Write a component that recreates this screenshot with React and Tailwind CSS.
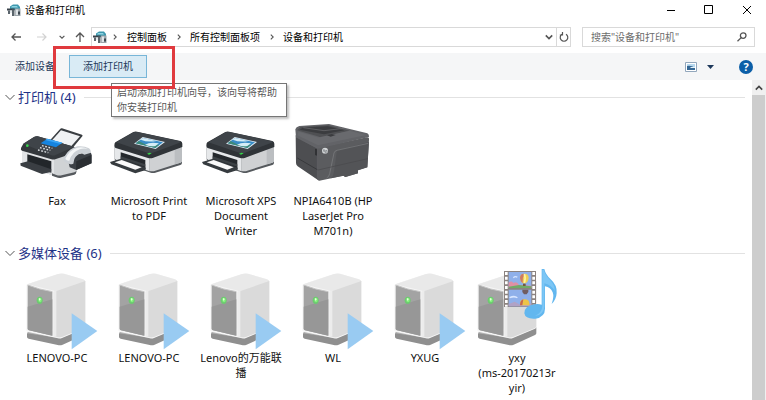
import React from 'react';

const printers = [
  { name: 'Fax', icon: FaxIcon },
  { name: 'Microsoft Print\nto PDF', icon: PrinterIcon },
  { name: 'Microsoft XPS\nDocument\nWriter', icon: PrinterIcon },
  { name: 'NPIA6410B (HP\nLaserJet Pro\nM701n)', icon: LaserIcon },
];

const mediaDevices = [
  { name: 'LENOVO-PC', icon: PlayServerIcon },
  { name: 'LENOVO-PC', icon: PlayServerIcon },
  { name: 'Lenovo的万能联\n播', icon: PlayServerIcon },
  { name: 'WL', icon: PlayServerIcon },
  { name: 'YXUG', icon: PlayServerIcon },
  { name: 'yxy\n(ms-20170213r\nyir)', icon: MediaServerIcon },
];

const crumbs = ['控制面板', '所有控制面板项', '设备和打印机'];

function DevicesIcon() {
  return (
    <svg className="h-3 w-3.5 shrink-0" viewBox="0 0 14 12" aria-hidden="true">
      <path d="M3 2.5 6 .5h5l2 2.5v3H3z" fill="#3c97ae" />
      <path d="M5 2h5l1 1.5H4z" fill="#8fd3e0" />
      <path d="M0 4.5h7.5v2H0z" fill="#39424a" />
      <path d="M1 6.5h2V10H1zM5 5.5h2.5V12H5z" fill="#5b656c" />
      <path d="M3 6.5h2V9H3z" fill="#e4e9ec" />
      <path d="M8 4.5h5.5V12H8z" fill="#9ba4aa" />
      <path d="M8.7 5.5h2.5V11H8.7z" fill="#dfe4e7" />
      <path d="M11 7.5h2v3h-2z" fill="#3c474f" />
    </svg>
  );
}

function Chevron({ className, d, width = 1.3 }) {
  return (
    <svg className={className} viewBox="0 0 10 10" fill="none" stroke="currentColor" strokeWidth={width} aria-hidden="true">
      <path d={d} />
    </svg>
  );
}

function FaxIcon() {
  return (
    <svg className="h-[73px] w-full" viewBox="33 0 276 219" aria-hidden="true">
      {/* paper */}
      <path d="M150 61 181 26q2-2 5-1l60 19q3 2 1 5l-30 36z" fill="#3a3e42" />
      <path d="M157 60 183 31 240 49 212 80z" fill="#f0f2f4" />
      {/* body */}
      <path d="M66 84 162 110 229 88v66q0 6-6 8l-38 9q-8 2-16-1L70 134q-4-2-4-6z" fill="#b9bcbf" />
      <path d="M66 84 162 114v54l-92-34q-4-2-4-6z" fill="#e2e4e6" />
      <path d="M162 112 229 92v62q0 5-5 7l-40 9q-9 2-22-2z" fill="#d0d3d5" />
      <path d="m156 160 13 5q8 3 16 1l38-9q6-2 6-6v5q0 6-6 8l-38 9q-8 2-16-1l-13-5z" fill="#55595d" />
      <path d="M82 103 154 124v34l-72-25z" fill="#22262a" />
      <path d="M61 130 84 124 154 148l-1 8-27 6-64-25z" fill="#3a3e43" />
      {/* lid */}
      <path d="M70 71 102 51q5-3 11-2l109 31q8 4 8 12l-1 5-61 20q-7 3-14 1L66 92q-5-2-3-8z" fill="#34383c" />
      <path d="M70 71 102 51q5-3 11-2l109 31-55 25q-6 3-13 1z" fill="#3f4449" />
      <path d="m122 70 20-14 45 12-19 14z" fill="#1684df" />
      <path d="m142 56 45 12-5 4-46-12z" fill="#3ca7f6" />
      <g stroke="#e3e6e9" strokeWidth="4" strokeDasharray="5 5">
        <path d="m126 77 31 8M120 83l31 8M114 90l31 8" />
      </g>
      <circle cx="82" cy="77" r="4" fill="#37d24d" />
      {/* handset cradle */}
      <path d="m204 119 28-16 38-7q4 3 5 8v26l-46 20-20-8z" fill="#3c4146" />
      <path d="m229 124 45-19v25l-46 20z" fill="#2b2f33" />
      {/* handset */}
      <path d="M192 124q-4-8 3-17 14-23 38-28 20-2 34 6 6 4 6 13l-20 6q-6-3-8-5-15 4-22 18l-3 14q-14 6-28-7z" fill="#ccd1d6" />
      <path d="M196 117q10-26 36-34 19-3 31 4-12-3-24 1-23 8-31 34-7 1-12-5z" fill="#f4f6f7" />
    </svg>
  );
}

function PrinterIcon() {
  return (
    <svg className="h-[73px] w-full" viewBox="309 0 276 219" aria-hidden="true">
      <path d="m344 82 105 32 97-33v47q0 5-5 7l-75 23q-7 2-14 0L348 123q-4-2-4-6z" fill="#55595d" />
      <path d="m344 78 105 32v44l-101-35q-4-2-4-6z" fill="#e6e8ea" />
      <path d="m449 110 97-33v45q0 4-5 6l-75 24q-8 3-17 1z" fill="#cfd1d3" />
      <path d="m524 85 22-8v45q0 4-5 6l-17 5z" fill="#bbbec1" />
      <path d="m362 97 74 23v31l-74-25z" fill="#24282c" />
      <path d="m362 109 74 24v7l-74-24z" fill="#3c4145" />
      {/* output tray */}
      <path d="m330 126 33-10 75 27-3 8-29 9-72-27z" fill="#363b3f" />
      <path d="m344 127 21-7 60 22-19 7z" fill="#fafafa" />
      {/* lid */}
      <path d="m346 67 54-31q5-2 11-1l130 28q6 2 6 8v10l-87 32q-8 3-16 1L347 84q-4-2-4-7 0-7 3-10z" fill="#303438" />
      <path d="m349 67 52-30q5-2 11-1l128 28q3 1-1 4l-80 30q-8 3-15 1z" fill="#3f4449" />
      <path d="m402 71 26-20 67 15-28 21z" fill="#dfeaf1" />
      <path d="m407 70 22-16 60 13-23 17z" fill="#398cc7" />
      <path d="m407 70 9-7 18 9q18 1 44 2l-12 10z" fill="#3e8a79" />
      <path d="m422 59 7-5 40 9q-25 5-47-4zm13 15q15-9 42-4l-11 8q-13 3-31-4z" fill="#d5edf6" />
      <path d="m441 101 8-3 6 2-8 4z" fill="#35db49" />
    </svg>
  );
}

function LaserIcon() {
  return (
    <svg className="h-[73px] w-full" viewBox="291 0 276 219" aria-hidden="true">
      <path d="m317 46 72 35-4 100-62-42q-5-4-5-10z" fill="#4d4e51" />
      <path d="m382 83 149-31q7 0 6 7l-5 83-28 9v9l-38 11-6-4-72 15q-5 0-6-5z" fill="#5b5c5f" />
      <path d="m441 91 96-25-5 76-28 9v9l-38 11-6-4-38 8q9-7 10-20l9-64z" fill="#535457" />
      <path d="M316 28q2-8 12-10l89-6 115 28q6 3 5 11l-147 34q-5 2-12-1l-60-32z" fill="#626367" />
      <path d="m321 31 11-10 83-5 64 16-79 19q-9 2-17-2z" fill="#4f5053" />
      <path d="m329 29 9-6 75-4 50 12-61 12z" fill="#3b3c3f" />
      <path d="m326 35 51 15q9 3 18 0l84-18 50 13-145 31-62-30z" fill="#696a6e" />
      <path d="m340 23 62 9 59-7" fill="none" stroke="#6f7073" strokeWidth="2" />
      <path d="m411 46 14-4 12 3-15 5z" fill="#3b3c3f" />
      <path d="m318 51 64 33v90" fill="none" stroke="#66676a" strokeWidth="1.5" />
      <path d="M535 70 441 91q-7 1-9 8l-13 62q-2 10-9 13" fill="none" stroke="#8b8c8f" strokeWidth="1.5" />
      <path d="m322 114 60 35" stroke="#38393c" strokeWidth="3" />
      <path d="m384 150 149-34" stroke="#48494c" strokeWidth="2" />
      <path d="m376 86 4 2v19l-4-2z" fill="#242527" />
      <circle cx="405" cy="92" r="9" fill="#d3d6d8" />
      <path d="m402 87-2 8m1-4q4-2 3 1l-1 4m5-6-3 11m3-9q5-2 3 3-1 3-4 2" fill="none" stroke="#65676b" strokeWidth="1.6" />
    </svg>
  );
}

function ServerBody() {
  return (
    <g>
      {/* base */}
      <path d="M48 198q0-4 6-6l98-24 67 7q4 1 4 6v15q0 3-4 5l-64 29q-7 3-15 1l-87-19q-5-1-5-5z" fill="#8f8f8f" />
      <path d="M48 196q0-3 6-4l98-24 67 7q4 1 4 5l-68 28q-7 3-15 1z" fill="#b2b2b2" />
      {/* cabinet */}
      <path d="M46 52q0-3 5-5l90-29q9-3 18-1l57 17q7 2 7 8v135q0 3-4 5l-66 28q-6 3-12 1l-90-19q-5-1-5-5z" fill="#f6f6f6" />
      <path d="m49 49 92-31q9-3 18-1l57 17q7 2 7 7l-75 28q-6 3-13 1z" fill="#e9e9e9" />
      <path d="M131 72q2-2 6-3l86-30v136q0 3-4 5l-66 27q-8 3-22-1z" fill="#dadada" />
      <path d="M127 71q3-3 9-3v139l-9-2z" fill="#ececec" />
      <path d="M50 51q35 14 74 20v132l-70-16q-4-1-4-5z" fill="#a3a3a3" />
      <path d="m50 116 74-22v109l-70-16q-4-1-4-5z" fill="#979797" />
      <path d="M50 51q35 14 74 20" fill="none" stroke="#c6c6c6" strokeWidth="3" />
      <ellipse cx="86" cy="97" rx="9" ry="11" fill="#6dca70" />
      <ellipse cx="87" cy="96" rx="5" ry="7" fill="#86f47d" />
      <path d="m83 92 4-2 2 5-4 3z" fill="#eaffdf" />
    </g>
  );
}

function PlayServerIcon() {
  return (
    <svg className="h-[82px] w-full" viewBox="0 0 276 246" aria-hidden="true">
      <ServerBody />
      <path d="m182 136 77 53-77 55z" fill="#99cbf2" />
    </svg>
  );
}

function Balloon({ y }) {
  return (
    <g transform={`translate(160 ${y})`}>
      <path d="M-13-3q0-13 13-13t13 13q0 8-8 16h-10q-8-8-8-16z" fill="#f0cf55" />
      <path d="M-13-3q0-13 13-13-7 13-5 29-8-8-8-16z" fill="#cc7a66" />
      <path d="M0-15q5 12 0 27" stroke="#fff3a0" strokeWidth="5" fill="none" />
      <path d="M-4 14h8v7h-8z" fill="#725844" />
    </g>
  );
}

function MediaServerIcon() {
  return (
    <svg className="h-[82px] w-full" viewBox="0 0 276 246" aria-hidden="true">
      <g transform="translate(-27 0)">
        <ServerBody />
      </g>
      {/* film strip */}
      <path d="M99 9h96v108H99z" fill="#8b8380" />
      <path d="M113 12h68v48h-68zM113 65h68v50h-68z" fill="#8fb0ea" />
      <path d="M113 44q8-7 14 1 11-7 17 6l37 2v7h-68z" fill="#e08fa5" />
      <path d="m113 56 31-5 37 4v5h-68z" fill="#70aa67" />
      <path d="M116 89q14-8 23 0-9-5-23 0zm23-61q-6-5-12 1" fill="none" stroke="#d8e6ff" strokeWidth="4" />
      <path d="m113 108 18-7 18 10 32-5v9h-68z" fill="#b0a2c6" />
      <Balloon y={33} />
      <path d="M154 65h18v7l-5 7h-8l-5-7z" fill="#705d62" />
      <path d="M147 106q0-12 14-12t14 12v6h-28z" fill="#edc448" />
      <path d="M157 94q-10 3-10 18h7z" fill="#c56852" />
      <path d="M106 12v104M188 12v104" stroke="#fff" strokeWidth="8" strokeDasharray="9 5" />
      {/* note */}
      <path d="M212 3h8q4 17 19 31 20 18 18 41-1 19-15 33 8-22 3-35-6-15-23-18v67q0 25-29 30-30 2-33-16-1-21 30-27 12-2 22 1z" fill="#62b7ef" />
      <path d="M214 5h4q4 15 19 31 16 17 14 34-8-18-31-24v70q-1 23-28 28 21-10 22-30z" fill="#7cc6f5" />
    </svg>
  );
}

function DeviceGroup({ title, count, devices, className }) {
  return (
    <section className={className}>
      <div className="flex h-[18px] items-center pl-[5px] pr-[7px]">
        <button type="button" aria-label={title} className="mr-[3px] text-[#555]">
          <Chevron className="h-2.5 w-2.5" d="M.5 3 5 7.5 9.5 3" width={1} />
        </button>
        <h2 className="mr-2 whitespace-nowrap text-[13px] leading-[18px] text-[#1e3287]">
          {title} ({count})
        </h2>
        <div className="h-px flex-1 bg-[#e2e2e2]" />
      </div>
      <ul className="flex flex-wrap pl-[11px]">
        {devices.map(({ name, icon: Icon }, index) => (
          <li key={index} className="flex w-[92px] flex-col items-center">
            <Icon />
            <span className="whitespace-pre text-center text-[11px] leading-[15px] text-[#111]">{name}</span>
          </li>
        ))}
      </ul>
    </section>
  );
}

function TitleBar() {
  return (
    <div className="flex h-5 items-center pl-[7px] pr-[14px]">
      <DevicesIcon />
      <h1 className="ml-1 flex-1 text-[10px] leading-5 text-black">设备和打印机</h1>
      <div className="flex items-center gap-7 text-black">
        <button type="button" aria-label="最小化">
          <svg className="h-2.5 w-2.5" viewBox="0 0 10 10" stroke="currentColor"><path d="M1 5.5h8" /></svg>
        </button>
        <button type="button" aria-label="最大化">
          <svg className="h-2.5 w-2.5" viewBox="0 0 10 10" fill="none" stroke="currentColor"><path d="M.5.5h8v8h-8z" /></svg>
        </button>
        <button type="button" aria-label="关闭">
          <svg className="h-2.5 w-2.5" viewBox="0 0 10 10" stroke="currentColor"><path d="m1 1 8 8M9 1 1 9" /></svg>
        </button>
      </div>
    </div>
  );
}

function NavBar() {
  return (
    <div className="flex items-center pb-[6px] pl-[11px] pr-[11px] pt-[7px]">
      <div className="flex w-20 shrink-0 items-center text-[#555]">
        <button type="button" aria-label="后退" className="mr-4">
          <svg className="h-2.5 w-2.5" viewBox="0 0 10 10" fill="none" stroke="currentColor" strokeWidth="1.3"><path d="M10 5H1M4.5 1.5 1 5l3.5 3.5" /></svg>
        </button>
        <button type="button" aria-label="前进" className="mr-3 text-[#d2d2d2]">
          <svg className="h-2.5 w-2.5" viewBox="0 0 10 10" fill="none" stroke="currentColor" strokeWidth="1.2"><path d="M0 5h9M5.5 1.5 9 5 5.5 8.5" /></svg>
        </button>
        <button type="button" aria-label="最近位置" className="mr-2.5">
          <Chevron className="h-1.5 w-1.5" d="M1 3l4 4 4-4" width={2} />
        </button>
        <button type="button" aria-label="向上">
          <svg className="h-2.5 w-2.5" viewBox="0 0 10 10" fill="none" stroke="currentColor" strokeWidth="1.3"><path d="M5 10V1M1 5l4-4 4 4" /></svg>
        </button>
      </div>
      <nav className="flex h-5 flex-1 items-center border border-[#d9d9d9] pl-px text-[10px] text-black" aria-label="地址">
        <DevicesIcon />
        {crumbs.map((crumb, index) => (
          <React.Fragment key={crumb}>
            <span className={index === 0 ? 'flex w-5 justify-center pr-1 text-[#555]' : 'flex w-[23px] justify-center text-[#555]'}>
              <Chevron className="h-1.5 w-1.5" d="M3 1l4 4-4 4" width={1.8} />
            </span>
            <a href="#" className="whitespace-nowrap leading-[18px]">{crumb}</a>
          </React.Fragment>
        ))}
        <button type="button" aria-label="历史记录" className="ml-auto mr-[3px] text-[#555]">
          <Chevron className="h-2 w-2" d="M1 3l4 4 4-4" width={2} />
        </button>
        <button type="button" aria-label="刷新" className="flex h-full w-3.5 items-center justify-center border-l border-[#d9d9d9] text-[#555]">
          <svg className="h-2.5 w-2.5" viewBox="0 0 10 10" fill="none" stroke="currentColor" strokeWidth="1.2">
            <path d="M7 2.2A3.8 3.8 0 1 1 3 2.2M3.5 0v3H.8" />
          </svg>
        </button>
      </nav>
      <div className="ml-[11px] flex h-5 w-[173px] items-center border border-[#d9d9d9] pl-2 pr-[7px]">
        <input
          type="text"
          aria-label="搜索"
          placeholder={'搜索"设备和打印机"'}
          className="min-w-0 flex-1 bg-transparent text-[10px] leading-[18px] outline-none placeholder:text-[#6d6d6d]"
        />
        <svg className="h-2.5 w-2.5 text-[#555]" viewBox="0 0 10 10" fill="none" stroke="currentColor" strokeWidth="1.3" aria-hidden="true">
          <circle cx="6.2" cy="3.6" r="2.8" />
          <path d="M4.2 5.6.5 9.3" />
        </svg>
      </div>
    </div>
  );
}

function CommandBar() {
  return (
    <div className="flex h-[27px] items-center bg-[#f5f6f7] pl-[15px] pr-[13px] text-[10px] text-[#1e395b]">
      <button type="button" className="mr-[14px]">添加设备</button>
      <div className="relative">
        <button type="button" className="block h-[23px] w-[78px] border border-[#78b6d8] bg-[#d9ebf5]">
          添加打印机
        </button>
        <div
          role="tooltip"
          className="absolute left-[42px] top-7 z-10 w-[176px] whitespace-nowrap border border-[#767676] bg-white px-[5px] pb-px pt-px text-[10px] leading-[15px] text-[#575757] shadow-[2px_2px_2px_#8888]"
        >
          启动添加打印机向导，该向导将帮助
          <br />
          你安装打印机
        </div>
        {/* highlight frame */}
        <div className="pointer-events-none absolute -left-4 -top-[9px] z-20 h-[43px] w-[122px] border-[3px] border-[#e03a3e]" />
      </div>
      <button type="button" aria-label="更改视图" className="ml-auto mr-2.5">
        <svg className="h-2.5 w-3" viewBox="0 0 12 10">
          <path d="M.5.5h11v9H.5z" fill="#fff" stroke="#92a7bc" />
          <path d="M2 2h8v6H2z" fill="#b8d9ef" />
          <path d="M2 4q4-1 8 2v2H2z" fill="#356895" />
          <path d="M5 5h5v1H6z" fill="#e6f2f8" />
        </svg>
      </button>
      <button type="button" aria-label="更多选项" className="mr-[25px]">
        <svg className="h-1 w-[7px]" viewBox="0 0 7 4"><path d="M0 0h7L3.5 4z" fill="#1e395b" /></svg>
      </button>
      <button type="button" aria-label="帮助" className="flex h-3.5 w-3.5 items-center justify-center rounded-full bg-[#0c5fa8] text-[11px] font-bold leading-[14px] text-white">
        ?
      </button>
    </div>
  );
}

export default function App() {
  return (
    <div className="flex h-screen flex-col overflow-hidden bg-white font-['Noto_Sans','Noto_Sans_CJK_SC',sans-serif]">
      <header>
        <TitleBar />
        <NavBar />
        <CommandBar />
      </header>
      <div className="flex min-h-0 flex-1">
        <main className="min-w-0 flex-1 overflow-hidden pt-2">
          <DeviceGroup title="打印机" count={4} devices={printers} className="[&_ul]:pt-[14px]" />
          <DeviceGroup title="多媒体设备" count={6} devices={mediaDevices} className="pt-[6px] [&_ul]:pt-[6px]" />
        </main>
        <div className="flex w-3.5 shrink-0 flex-col bg-[#f0f0f0]">
          <button type="button" aria-label="向上滚动" className="flex h-[15px] items-center justify-center text-[#444]">
            <Chevron className="h-2 w-2" d="M1 7l4-4 4 4" width={2} />
          </button>
          <div className="mr-px flex-1 bg-[#cdcdcd]" />
        </div>
      </div>
    </div>
  );
}
